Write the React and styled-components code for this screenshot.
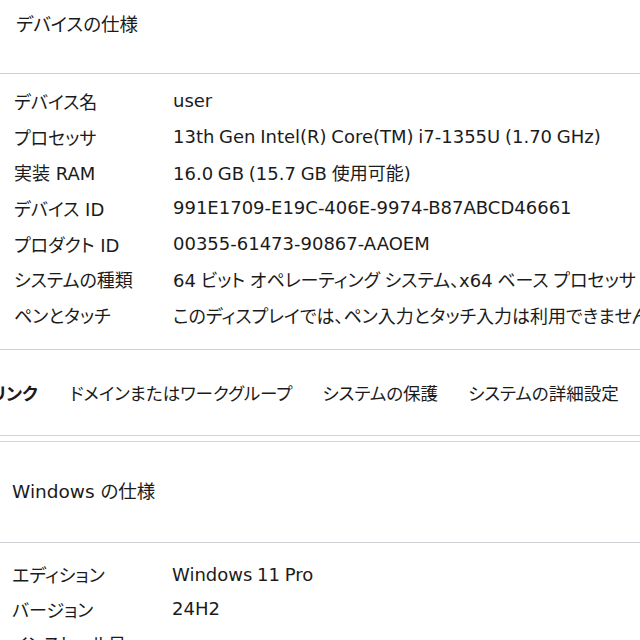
import React from "react";
import styled, { createGlobalStyle } from "styled-components";

const Global = createGlobalStyle`
  html, body { margin: 0; padding: 0; background: #ffffff; }
  body {
    font-family: "DejaVu Sans", "Noto Sans CJK JP", sans-serif;
    font-feature-settings: "palt";
    color: #1b1b1b;
    overflow: hidden;
  }
`;

const Page = styled.div`
  width: 640px;
  height: 640px;
  overflow: hidden;
  background: #ffffff;
`;

const Card = styled.section`
  border-top: ${(p) => (p.$top ? "1px solid #d4d7da" : "none")};
  margin-top: ${(p) => (p.$top ? "5px" : "0")};
`;

const Header = styled.div`
  height: ${(p) => p.$h}px;
  display: flex;
  align-items: ${(p) => (p.$top ? "flex-start" : "center")};
  padding-left: ${(p) => p.$pl}px;
  padding-top: ${(p) => (p.$top ? 12 : 0)}px;
  border-bottom: 1px solid #cdd1d5;
  box-sizing: border-box;
`;

const Title = styled.h2`
  margin: 0;
  font-size: 18.5px;
  font-weight: 400;
  line-height: 26px;
`;

const Rows = styled.div`
  padding: ${(p) => p.$pt}px 0 ${(p) => p.$pb}px ${(p) => p.$pl}px;
`;

const Row = styled.div`
  display: grid;
  grid-template-columns: ${(p) => p.$col}px 1fr;
  height: ${(p) => p.$h}px;
  align-items: center;
  font-size: 18px;
  white-space: nowrap;
`;

const Label = styled.span``;
const Value = styled.span`
  word-spacing: -1px;
`;

const Links = styled.nav`
  height: 87px;
  display: flex;
  align-items: center;
  gap: 30px;
  margin-left: -44px;
  border-top: 1px solid #cdd1d5;
  border-bottom: 1px solid #d0d3d6;
  font-size: 17.5px;
  white-space: nowrap;
  box-sizing: border-box;
`;

const LinkLabel = styled.span`
  font-weight: 700;
  margin-right: 2px;
`;

const LinkItem = styled.a`
  color: #1b1b1b;
  text-decoration: none;
`;

const device = [
  ["デバイス名", "user"],
  ["プロセッサ", "13th Gen Intel(R) Core(TM) i7-1355U (1.70 GHz)"],
  ["実装 RAM", "16.0 GB (15.7 GB 使用可能)"],
  ["デバイス ID", "991E1709-E19C-406E-9974-B87ABCD46661"],
  ["プロダクト ID", "00355-61473-90867-AAOEM"],
  ["システムの種類", "64 ビット オペレーティング システム、x64 ベース プロセッサ"],
  ["ペンとタッチ", "このディスプレイでは、ペン入力とタッチ入力は利用できません"],
];

const windows = [
  ["エディション", "Windows 11 Pro"],
  ["バージョン", "24H2"],
  ["インストール日", ""],
];

export default function App() {
  return (
    <Page>
      <Global />
      <Card>
        <Header $h={74} $pl={16} $top>
          <Title>デバイスの仕様</Title>
        </Header>
        <Rows $pt={9} $pb={16} $pl={14}>
          {device.map(([k, v]) => (
            <Row key={k} $col={159} $h={35.7}>
              <Label>{k}</Label>
              <Value>{v}</Value>
            </Row>
          ))}
        </Rows>
      </Card>
      <Links>
        <LinkLabel>関連リンク</LinkLabel>
        <LinkItem>ドメインまたはワークグループ</LinkItem>
        <LinkItem>システムの保護</LinkItem>
        <LinkItem>システムの詳細設定</LinkItem>
      </Links>
      <Card $top>
        <Header $h={101} $pl={12}>
          <Title>Windows の仕様</Title>
        </Header>
        <Rows $pt={14} $pb={0} $pl={12}>
          {windows.map(([k, v]) => (
            <Row key={k} $col={160} $h={34.5}>
              <Label>{k}</Label>
              <Value>{v}</Value>
            </Row>
          ))}
        </Rows>
      </Card>
    </Page>
  );
}
